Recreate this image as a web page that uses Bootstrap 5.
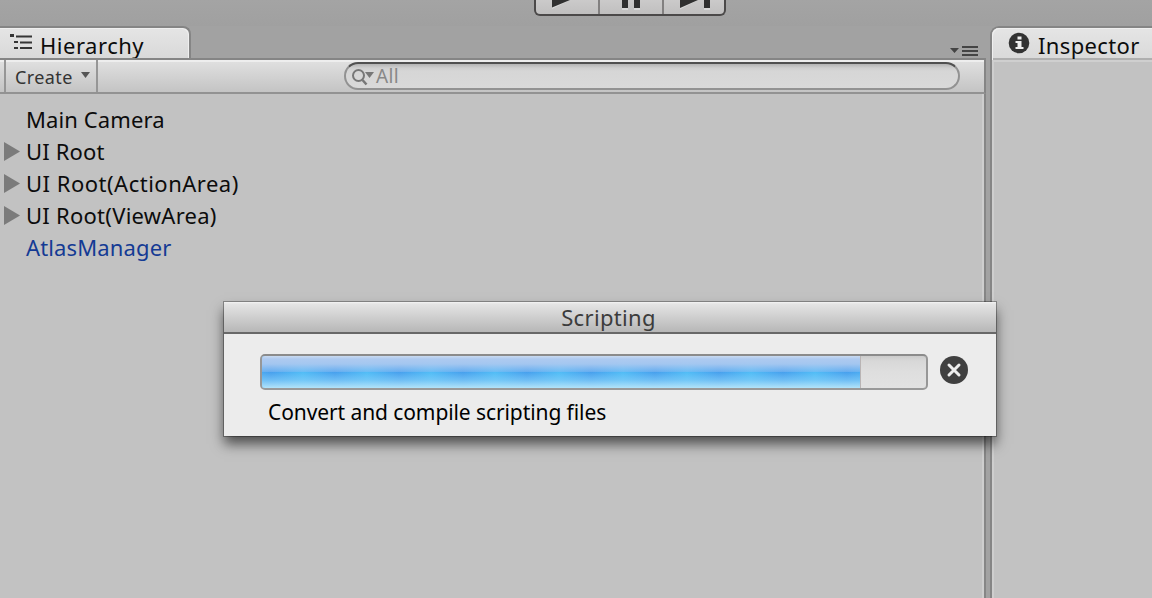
<!DOCTYPE html>
<html lang="en">
<head>
<meta charset="utf-8">
<title>Hierarchy</title>
<meta name="viewport" content="width=device-width, initial-scale=1">
<link href="https://cdn.jsdelivr.net/npm/bootstrap@5.3.0/dist/css/bootstrap.min.css" rel="stylesheet">
<style>
  body { height: 598px; background: #a2a2a2; font-family: "Noto Sans", "Open Sans", sans-serif; color: #0c0c0c; font-size: 22px; line-height: 32px; }
  svg { display: block; flex: none; }
  .topbar { height: 26px; background: linear-gradient(#a4a4a4, #a0a0a0); }
  .playgroup { width: 192px; height: 16px; margin-left: 534px; border: 2px solid #4b4949; border-top: 0; border-radius: 0 0 6px 6px; background: linear-gradient(#cbcaca, #c0bfbf); }
  .playgroup > div + div { border-left: 2px solid #828080; }
  .workspace { height: 572px; }
  .left-pane { width: 986px; }
  .tab-strip { height: 32px; }
  .tab-l { width: 191px; height: 32px; padding-top: 1px; border: 2px solid #858585; border-width: 2px 2px 0 0; border-radius: 0 8px 0 0; background: linear-gradient(#e5e5e5, #d9d9d9); box-shadow: inset -1px 1px #efefef; }
  .toolbar { height: 36px; border: 2px solid #858585; border-left: 0; background: linear-gradient(#eee 0 2px, #dfdfdf 2px, #c4c4c4); border-bottom-color: #929292; }
  .create { width: 94px; margin-left: 4px; border: 2px solid #969696; border-width: 0 2px; font-size: 18px; line-height: 34px; color: #333; }
  .search { width: 616px; height: 28px; margin-left: 246px; margin-top: 2px; padding-left: 6px; border: 2px solid #929292; border-top-color: #505050; border-radius: 14px; background: linear-gradient(#b4b4b4, #cfcfcf 4px, #d6d6d6 7px, #d9d9d9); color: #888; font-size: 19px; }
  .tree { background: #c2c2c2; border-right: 2px solid #868686; box-shadow: inset -2px 0 #cecece; padding-top: 10px; }
  .tree-row { height: 32px; padding-left: 4px; line-height: 30px; }
  .tree-row svg { margin-right: 6px; }
  .right-pane { width: 162px; margin-left: 4px; border: 2px solid #858585; border-width: 2px 0 0 2px; border-radius: 9px 0 0 0; background: #c2c2c2; box-shadow: inset 2px 0 #cecece; }
  .tab-r { height: 34px; padding-left: 16px; line-height: 34px; border-bottom: 2px solid #cfcfcf; background: linear-gradient(#e5e5e5, #d9d9d9); border-radius: 7px 0 0 0; box-shadow: inset 1px 1px #efefef, inset 0 -2px #afafaf; }
  .dialog { left: 224px; top: 302px; width: 772px; height: 134px; background: #ececec; box-shadow: 0 0 0 1px rgba(0,0,0,.3), 0 8px 12px rgba(0,0,0,.6); }
  .dialog-title { height: 32px; border-bottom: 2px solid #686868; background: linear-gradient(#f4f4f4 0, #e4e4e4 2px, #b7b7b7); color: #3c3c3c; line-height: 30px; padding-right: 3px; }
  .meter { width: 668px; height: 36px; border: 2px solid #999; border-color: #8b8b8b #979797 #999; border-radius: 5px; background: linear-gradient(#cbcbcb, #d8d8d8 5px, #dedede 50%, #e2e2e2); overflow: hidden; }
  .meter-fill { border-right: 1px solid #b9b4b4;
    background:
      linear-gradient(#c9daf0 0, #aecaf0 3px, rgba(168,200,240,.95) 25%, rgba(145,190,242,.45) 49%, transparent 50%, rgba(132,205,248,.65) 75%, #b2e3f9 100%),
      repeating-linear-gradient(90deg, #50bdf6 0, #469fed 32px, #50bdf6 64px) -23px 0 / calc(100% + 23px) 100%; }
  .message { margin: 6px 0 0 44px; color: #000; font-size: 21px; }
  .t { white-space: pre; }
</style>
<script src="https://cdn.jsdelivr.net/npm/bootstrap@5.3.0/dist/js/bootstrap.bundle.min.js"></script>
</head>
<body class="m-0 overflow-hidden position-relative">
  <header class="topbar">
    <div class="playgroup d-flex">
      <div style="width:62px"><svg width="62" height="14"><path d="M16 0H34L16 9z" fill="#d9d9d9"/><path d="M16 0H34L16 7.500z" fill="#303030"/></svg></div>
      <div style="width:64px"><svg width="62" height="14"><path d="M22 0h6v10h-6zM34 0h6v10h-6z" fill="#d9d9d9"/><path d="M22 0h6v8h-6zM34 0h6v8h-6z" fill="#303030"/></svg></div>
      <div style="width:62px"><svg width="60" height="14"><path d="M16 0H34L16 9.500zM40 0h6v10h-6z" fill="#d9d9d9"/><path d="M16 0H34L16 8zM40 0h6v8h-6z" fill="#303030"/></svg></div>
    </div>
  </header>
  <main class="workspace d-flex">
    <section class="left-pane d-flex flex-column">
      <div class="tab-strip d-flex justify-content-between">
        <div class="tab-l d-flex">
          <svg width="40" height="29"><path d="M10 5h4v3h-4zM14 12h4v2h-4zM14 18h4v2h-4zM16 6.500h16v2H16zM20 12.500h12v2H20zM20 18h12v2H20z" fill="#353535"/></svg>
          <span class="t" style="letter-spacing:.52px">Hierarchy</span>
        </div>
        <svg width="36" height="32"><path d="M0 22h9l-4.500 5zM12 20h16v2H12zM12 24h16v2H12zM12 28h16v2H12z" fill="#444"/></svg>
      </div>
      <div class="toolbar d-flex">
        <div class="create d-flex">
          <span class="t" style="margin-left:9px;letter-spacing:.4px">Create</span>
          <svg width="10" height="20" class="ms-2"><path d="M0 12h9l-4.500 6z" fill="#555"/></svg>
        </div>
        <div class="search d-flex align-items-center">
          <svg width="24" height="24"><circle cx="6.500" cy="11.500" r="5.500" fill="none" stroke="#777" stroke-width="2"/><path d="M10.500 16l4 4.500" stroke="#777" stroke-width="2.500"/><path d="M13 8h9l-4.500 6z" fill="#777"/></svg>
          <span class="t" style="letter-spacing:.4px">All</span>
        </div>
      </div>
      <div class="tree flex-grow-1">
        <div class="tree-row d-flex"><svg width="16" height="32"></svg><span class="t" style="letter-spacing:.1px">Main Camera</span></div>
        <div class="tree-row d-flex"><svg width="16" height="32"><path d="M0 6l16 9.500L0 25z" fill="#7b7b7b"/></svg><span class="t" style="letter-spacing:.15px">UI Root</span></div>
        <div class="tree-row d-flex"><svg width="16" height="32"><path d="M0 6l16 9.500L0 25z" fill="#7b7b7b"/></svg><span class="t" style="letter-spacing:.5px">UI Root(ActionArea)</span></div>
        <div class="tree-row d-flex"><svg width="16" height="32"><path d="M0 6l16 9.500L0 25z" fill="#7b7b7b"/></svg><span class="t" style="letter-spacing:.26px">UI Root(ViewArea)</span></div>
        <div class="tree-row d-flex"><svg width="16" height="32"></svg><span class="t" style="color:#143a94;letter-spacing:.14px">AtlasManager</span></div>
      </div>
    </section>
    <section class="right-pane">
      <div class="tab-r d-flex">
        <svg width="30" height="30"><circle cx="11" cy="15" r="10.300" fill="#333"/><path d="M9.500 8.500h4v3h-4zM7.500 13h6v6h2v2h-8v-2h2v-4h-2z" fill="#f0f0f0"/></svg>
        <span class="t" style="letter-spacing:.35px">Inspector</span>
      </div>
    </section>
  </main>
  <div class="dialog position-absolute" role="dialog">
    <div class="dialog-title text-center"><span class="t" style="letter-spacing:.32px">Scripting</span></div>
    <div class="d-flex" style="padding:20px 0 0 36px">
      <div class="meter d-flex"><div class="meter-fill" style="width:599px"></div></div>
      <svg width="30" height="34" style="margin-left:11px"><circle cx="15" cy="16" r="14" fill="#404040"/><path d="M10 11l10 10m0-10l-10 10" stroke="#eee" stroke-width="3" stroke-linecap="round"/></svg>
    </div>
    <div class="message"><span class="t" style="letter-spacing:-.09px">Convert and compile scripting files</span></div>
  </div>
</body>
</html>
